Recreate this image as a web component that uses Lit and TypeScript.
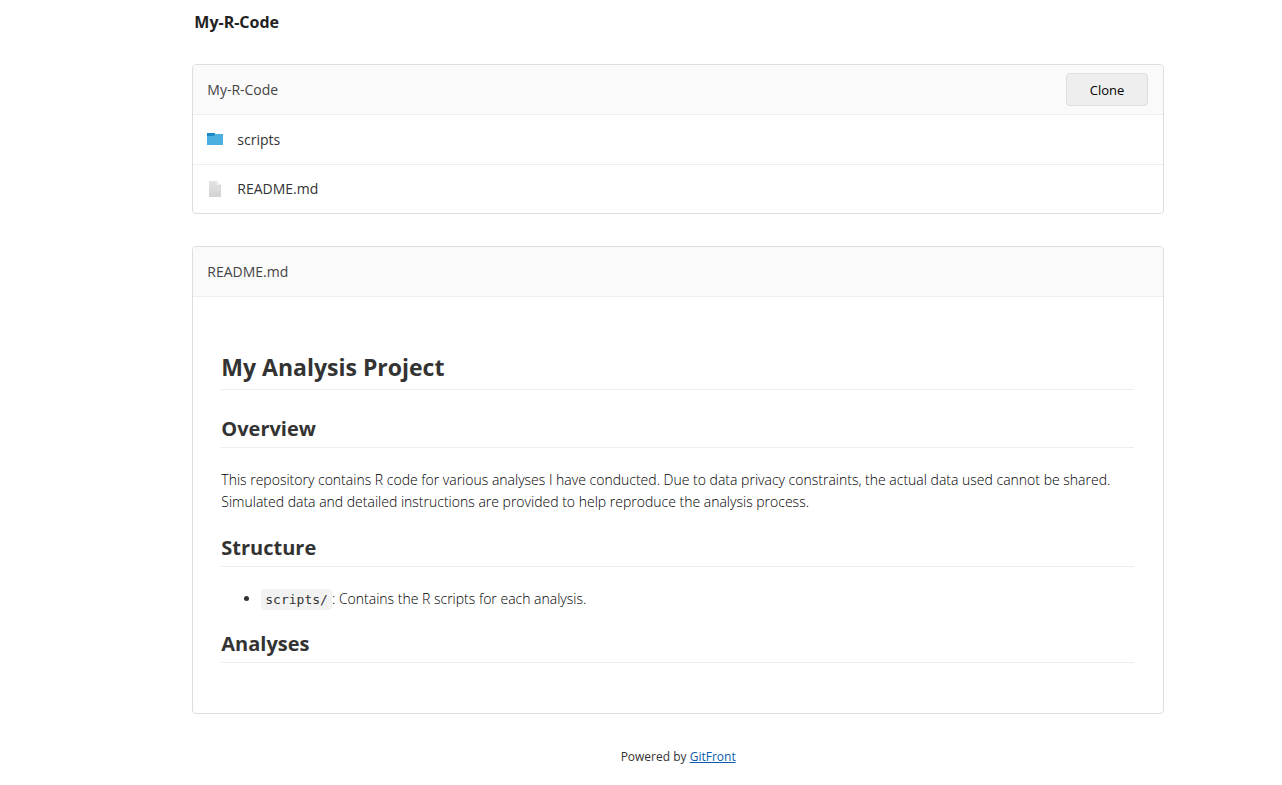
import { LitElement, html, css, svg } from "lit";
import { customElement } from "lit/decorators.js";

const folderIcon = html`<svg class="icon" viewBox="0 0 16 16" aria-hidden="true">
  ${svg`<path d="M0 1h8v3H0z" fill="#1e88c3"></path>
  <path d="M0 4h7l1-2h8v11H0z" fill="#4bafe0"></path>`}
</svg>`;

const fileIcon = html`<svg class="icon" viewBox="0 0 16 16" aria-hidden="true">
  ${svg`<defs><linearGradient id="paper" x1="0" y1="0" x2="0" y2="1">
    <stop offset="0" stop-color="#e4e4e4"></stop>
    <stop offset="1" stop-color="#d2d2d2"></stop>
  </linearGradient></defs>
  <path d="M2 0h8l4 4v12H2z" fill="url(#paper)"></path>
  <path d="M10 0l4 4h-4z" fill="#f3f3f3"></path>
  <path d="M10 4h4v1z" fill="#c8c8c8"></path>`}
</svg>`;

@customElement("app-root")
export class AppRoot extends LitElement {
  static styles = css`
    :host {
      display: block;
      color: #333;
      font-family: "Segoe UI", "Open Sans", "Noto Sans", sans-serif;
      font-size: 14px;
      line-height: 22px;
    }
    .page {
      margin: 0 118px 0 15%;
    }
    .title {
      margin: 0;
      padding: 11px 2px 31px;
      font-size: 16px;
      line-height: 22px;
      font-weight: 700;
      color: #222;
    }
    .card {
      border: 1px solid #ddd;
      border-radius: 4px;
      margin-bottom: 32px;
      overflow: hidden;
      background: #fff;
    }
    .head {
      display: flex;
      align-items: center;
      justify-content: space-between;
      height: 49px;
      padding: 0 15px 0 14px;
      background: #fafafa;
      border-bottom: 1px solid #eee;
      color: #444;
    }
    .clone {
      width: 82px;
      height: 33px;
      padding: 0;
      border: 1px solid #ddd;
      border-radius: 4px;
      background: #eee;
      color: #000;
      font: inherit;
      font-size: 13px;
    }
    .files {
      list-style: none;
      margin: 0;
      padding: 0;
    }
    .row {
      display: flex;
      align-items: center;
      gap: 14px;
      height: 49px;
      padding: 0 14px;
      color: #333;
      text-decoration: none;
    }
    .files li + li {
      border-top: 1px solid #eee;
    }
    .files li + li .row {
      height: 48px;
    }
    .icon {
      width: 16px;
      height: 16px;
    }
    .readme {
      padding: 55px 29px 50px 28px;
    }
    h1,
    h2 {
      font-weight: 700;
      border-bottom: 1px solid #eee;
    }
    h1 {
      margin: 0 0 25px;
      padding-bottom: 7px;
      font-size: 23px;
      line-height: 30px;
    }
    h2 {
      margin: 20px 0 21px;
      padding-bottom: 4px;
      font-size: 20px;
      line-height: 28px;
    }
    h2:last-child {
      margin-bottom: 0;
    }
    p {
      margin: 0 0 21px;
    }
    p,
    .list {
      font-weight: 300;
      color: #000;
    }
    .list {
      margin: 0;
      padding-left: 40px;
    }
    .list li::marker {
      color: #333;
    }
    code {
      padding: 3px 4px;
      border-radius: 4px;
      background: #f2f2f2;
      font-family: Consolas, "DejaVu Sans Mono", monospace;
      font-size: 13px;
      line-height: 14px;
      color: #333;
    }
    .foot {
      padding-bottom: 18px;
      text-align: center;
      font-size: 12px;
    }
    .foot a {
      color: #0b5cad;
    }
  `;

  render() {
    return html`
      <div class="page">
        <div class="title">My-R-Code</div>
        <section class="card">
          <div class="head">
            <span>My-R-Code</span>
            <button class="clone" type="button">Clone</button>
          </div>
          <ul class="files">
            <li><a class="row" href="#scripts">${folderIcon}<span>scripts</span></a></li>
            <li><a class="row" href="#readme">${fileIcon}<span>README.md</span></a></li>
          </ul>
        </section>
        <section class="card" id="readme">
          <div class="head"><span>README.md</span></div>
          <article class="readme">
            <h1>My Analysis Project</h1>
            <h2>Overview</h2>
            <p>
              This repository contains R code for various analyses I have conducted. Due to data
              privacy constraints, the actual data used cannot be shared. Simulated data and
              detailed instructions are provided to help reproduce the analysis process.
            </p>
            <h2>Structure</h2>
            <ul class="list">
              <li><code>scripts/</code>: Contains the R scripts for each analysis.</li>
            </ul>
            <h2>Analyses</h2>
          </article>
        </section>
        <footer class="foot">Powered by <a href="#gitfront">GitFront</a></footer>
      </div>
    `;
  }
}
